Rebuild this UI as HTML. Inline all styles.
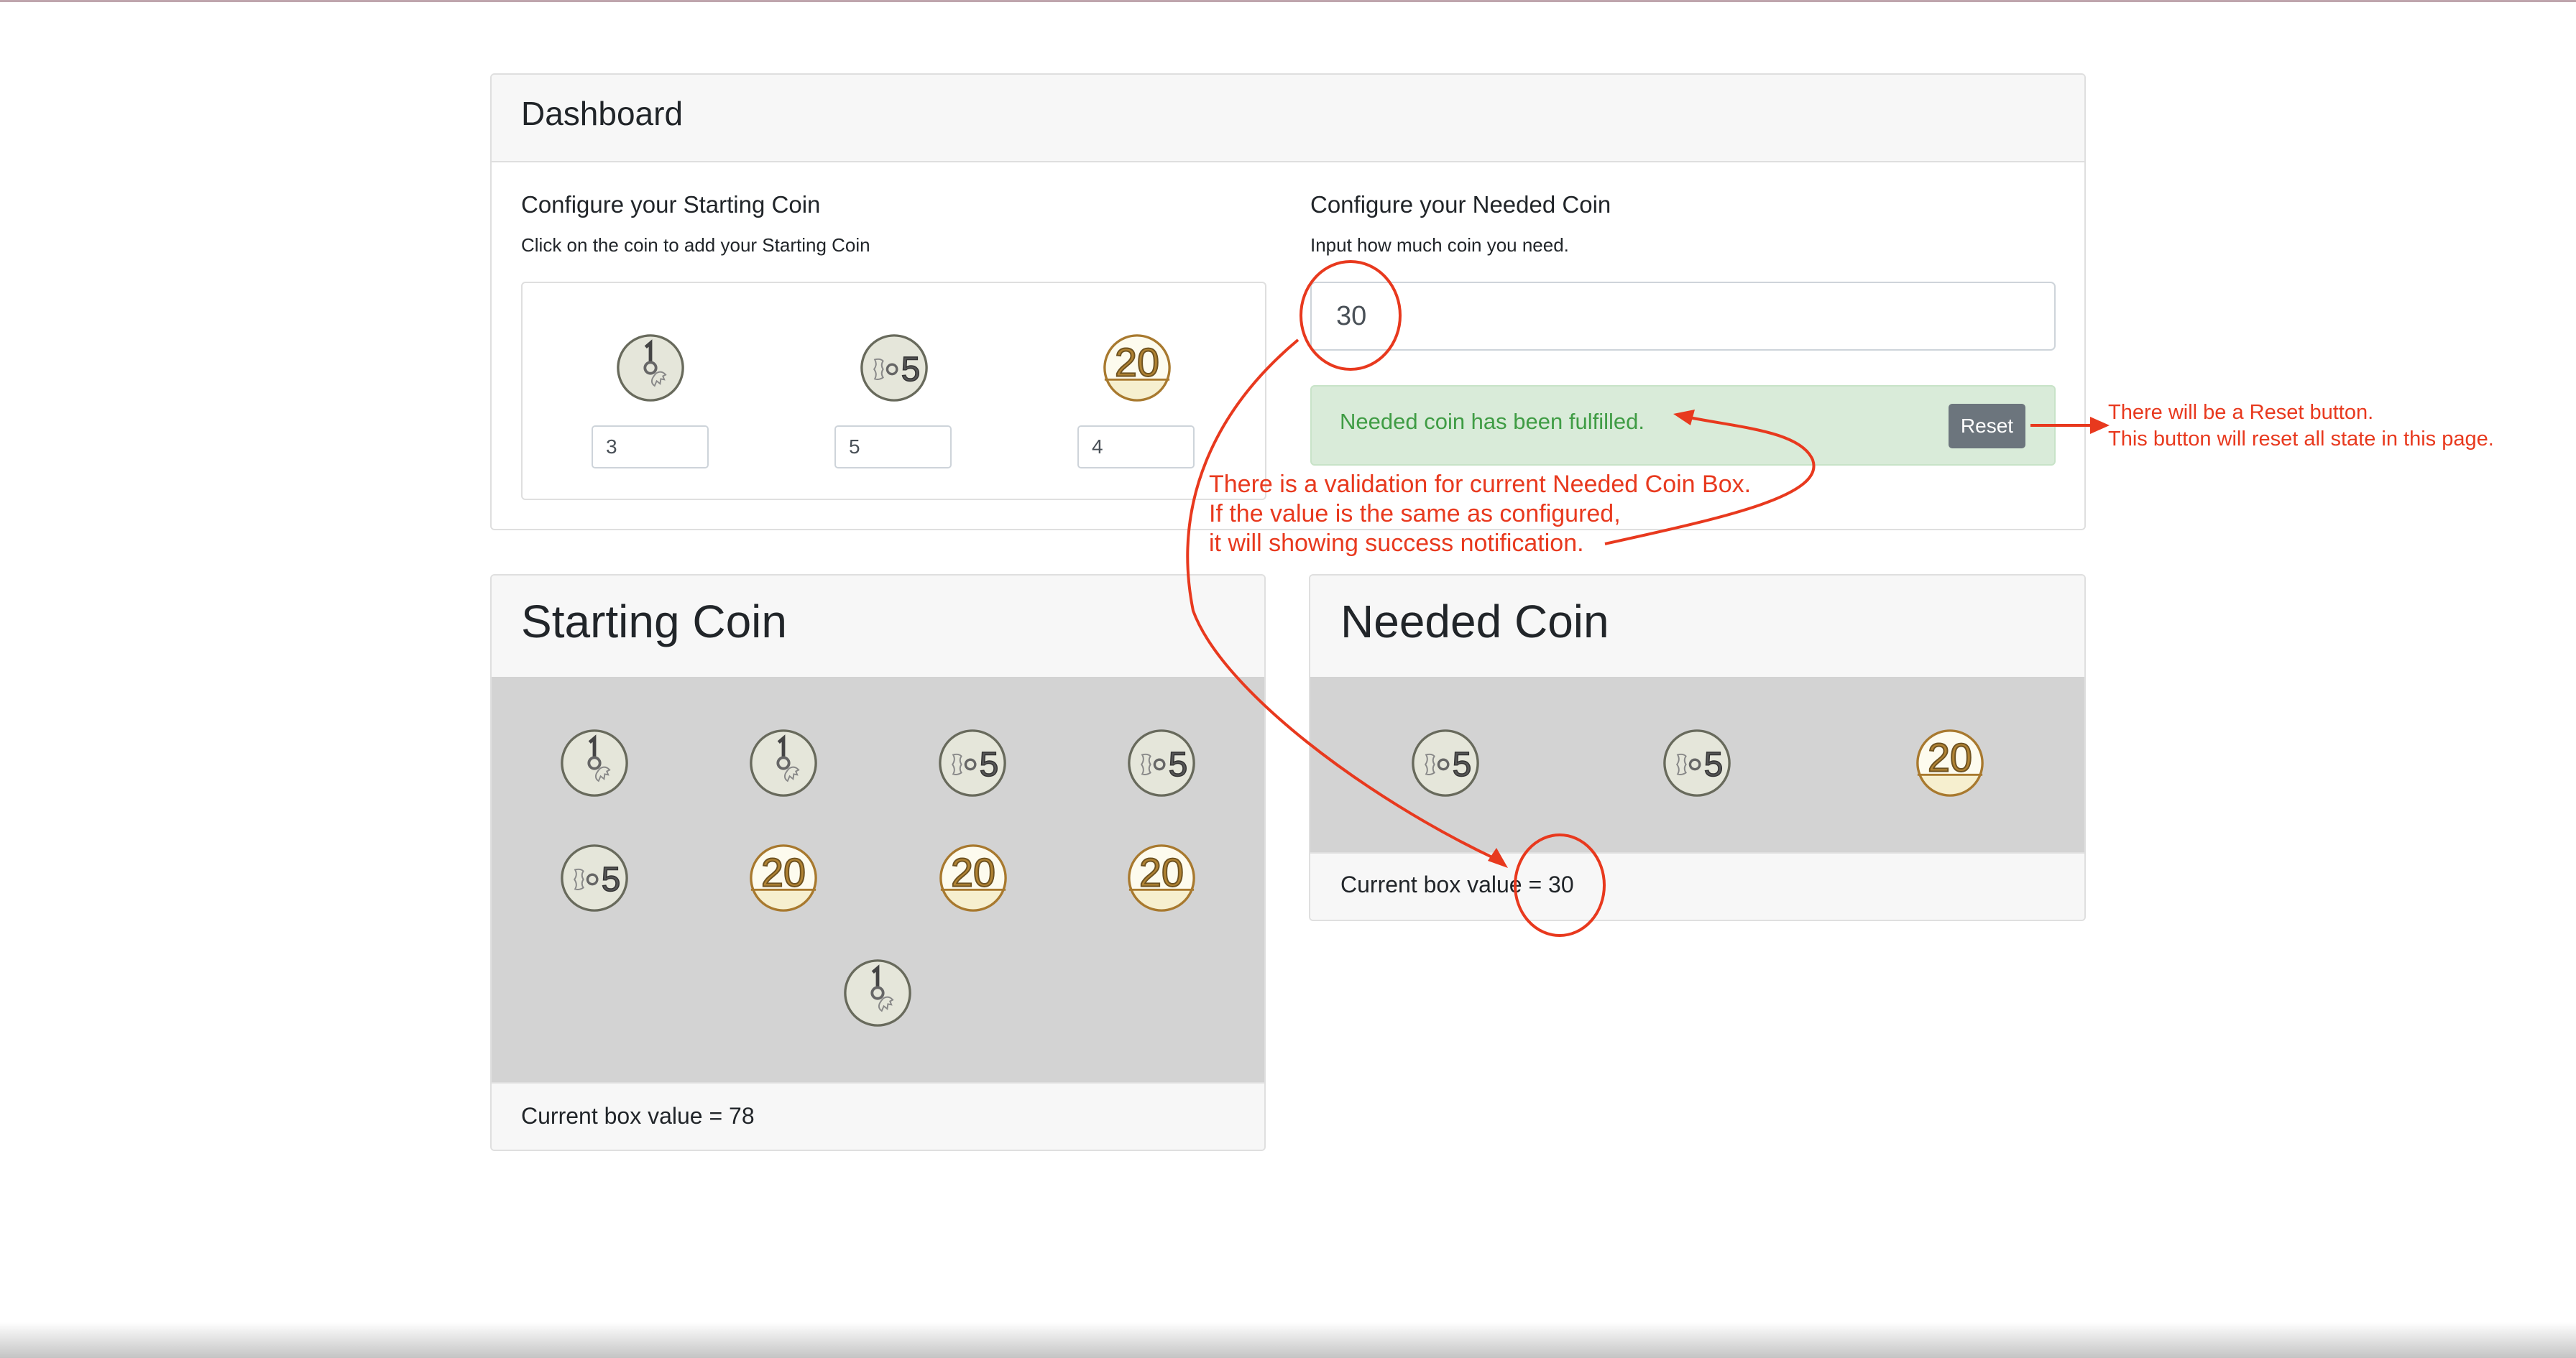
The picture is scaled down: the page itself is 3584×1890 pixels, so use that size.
<!DOCTYPE html>
<html><head><meta charset="utf-8"><style>
*{box-sizing:border-box;margin:0;padding:0}
body{width:3584px;height:1890px;background:#fff;position:relative;overflow:hidden;font-family:"Liberation Sans",Arial,sans-serif;color:#212529}
.abs{position:absolute}
.card{position:absolute;border:2px solid #dfdfdf;border-radius:6px;background:#fff;overflow:hidden}
.hdr{position:absolute;left:0;right:0;top:0;background:#f7f7f7;border-bottom:2px solid #dfdfdf}
.coin{position:absolute;width:96px;height:96px}
.inp{position:absolute;border:2px solid #ced4da;border-radius:5px;background:#fff;font-size:28px;color:#495057;padding-left:18px;display:flex;align-items:center}
.red{color:#e8391e;font-size:34px;line-height:41px;white-space:nowrap}
</style></head><body>
<div class="abs" style="left:0;top:0;width:3584px;height:3px;background:#bfa5ad"></div>

<!-- Dashboard -->
<div class="card" style="left:682px;top:102px;width:2220px;height:636px">
  <div class="hdr" style="height:122px"></div>
  <div class="abs" style="left:41px;top:24px;font-size:46px;line-height:60px">Dashboard</div>
  <div class="abs" style="left:41px;top:162px;font-size:33px">Configure your Starting Coin</div>
  <div class="abs" style="left:41px;top:222px;font-size:26px">Click on the coin to add your Starting Coin</div>
  <div class="abs" style="left:41px;top:288px;width:1037px;height:304px;border:2px solid #dfdfdf;border-radius:6px"></div>
  <div class="abs" style="left:1139px;top:162px;font-size:33px">Configure your Needed Coin</div>
  <div class="abs" style="left:1139px;top:222px;font-size:26px">Input how much coin you need.</div>
  <div class="inp" style="left:1139px;top:288px;width:1037px;height:96px;font-size:38px;padding-left:34px;border-radius:7px">30</div>
  <div class="abs" style="left:1139px;top:432px;width:1037px;height:112px;background:#d9ebd9;border:2px solid #c8e3c8;border-radius:6px"></div>
  <div class="abs" style="left:1180px;top:465px;font-size:31px;color:#3f9c44">Needed coin has been fulfilled.</div>
  <div class="abs" style="left:2027px;top:458px;width:107px;height:62px;background:#6c757d;border-radius:5px;color:#fff;font-size:28px;display:flex;align-items:center;justify-content:center">Reset</div>
</div>
<div class="inp" style="left:823px;top:592px;width:163px;height:60px">3</div>
<div class="inp" style="left:1161px;top:592px;width:163px;height:60px">5</div>
<div class="inp" style="left:1499px;top:592px;width:163px;height:60px">4</div>

<!-- Starting Coin -->
<div class="card" style="left:682px;top:799px;width:1079px;height:803px">
  <div class="hdr" style="height:141px;border-bottom:none"></div>
  <div class="abs" style="left:0;right:0;top:141px;height:564px;background:#d3d3d3"></div>
  <div class="abs" style="left:0;right:0;top:705px;bottom:0;background:#f7f7f7;border-top:2px solid #dfdfdf"></div>
  <div class="abs" style="left:41px;top:24px;font-size:64px;line-height:80px">Starting Coin</div>
  <div class="abs" style="left:41px;top:734px;font-size:32px">Current box value = 78</div>
</div>

<!-- Needed Coin -->
<div class="card" style="left:1821px;top:799px;width:1081px;height:483px">
  <div class="hdr" style="height:141px;border-bottom:none"></div>
  <div class="abs" style="left:0;right:0;top:141px;height:244px;background:#d3d3d3"></div>
  <div class="abs" style="left:0;right:0;top:385px;bottom:0;background:#f7f7f7;border-top:2px solid #dfdfdf"></div>
  <div class="abs" style="left:42px;top:24px;font-size:64px;line-height:80px">Needed Coin</div>
  <div class="abs" style="left:42px;top:412px;font-size:32px">Current box value = 30</div>
</div>

<svg width="0" height="0" style="position:absolute">
<defs>
<symbol id="c1" viewBox="0 0 100 100"><circle cx="50" cy="50" r="47" fill="#e5e6da" stroke="#686a5c" stroke-width="3.5"/><path d="M43 20 L50 14 L50 41" fill="none" stroke="#444" stroke-width="5"/><circle cx="50" cy="50" r="8" fill="none" stroke="#666" stroke-width="4"/><path d="M58 58 Q66 53 72 60 L68 62 L70 67 L65 66 L64 73 L59 69 L56 76 Q50 72 53 65 Q56 60 58 58Z" fill="none" stroke="#888" stroke-width="2"/></symbol>
<symbol id="c5" viewBox="0 0 100 100"><circle cx="50" cy="50" r="47" fill="#e5e6da" stroke="#686a5c" stroke-width="3.5"/><text x="60" y="69" font-family="Liberation Sans,sans-serif" font-size="50" fill="#555" stroke="#333" stroke-width="1.5">5</text><circle cx="47" cy="52" r="7" fill="none" stroke="#666" stroke-width="3.5"/><path d="M22 38 Q30 36 34 40 Q30 46 34 52 Q30 58 34 64 Q28 68 22 66 Q26 59 21 52 Q26 45 22 38Z" fill="none" stroke="#888" stroke-width="2"/></symbol>
<symbol id="c20" viewBox="0 0 100 100"><clipPath id="cc"><circle cx="50" cy="50" r="47"/></clipPath><circle cx="50" cy="50" r="47" fill="#fdfbee"/><rect x="0" y="67" width="100" height="40" fill="#f6efcf" clip-path="url(#cc)"/><line x1="3" y1="67" x2="97" y2="67" stroke="#a8792e" stroke-width="3"/><circle cx="50" cy="50" r="47" fill="none" stroke="#a8792e" stroke-width="3.5"/><text x="50" y="62" text-anchor="middle" font-family="Liberation Sans,sans-serif" font-size="58" fill="#b08232" stroke="#6e5220" stroke-width="2">20</text></symbol>
</defs></svg>

<svg class="coin" style="left:857px;top:464px"><use href="#c1"/></svg>
<svg class="coin" style="left:1196px;top:464px"><use href="#c5"/></svg>
<svg class="coin" style="left:1534px;top:464px"><use href="#c20"/></svg>

<svg class="coin" style="left:779px;top:1014px"><use href="#c1"/></svg>
<svg class="coin" style="left:1042px;top:1014px"><use href="#c1"/></svg>
<svg class="coin" style="left:1305px;top:1014px"><use href="#c5"/></svg>
<svg class="coin" style="left:1568px;top:1014px"><use href="#c5"/></svg>
<svg class="coin" style="left:779px;top:1174px"><use href="#c5"/></svg>
<svg class="coin" style="left:1042px;top:1174px"><use href="#c20"/></svg>
<svg class="coin" style="left:1306px;top:1174px"><use href="#c20"/></svg>
<svg class="coin" style="left:1568px;top:1174px"><use href="#c20"/></svg>
<svg class="coin" style="left:1173px;top:1334px"><use href="#c1"/></svg>

<svg class="coin" style="left:1963px;top:1014px"><use href="#c5"/></svg>
<svg class="coin" style="left:2313px;top:1014px"><use href="#c5"/></svg>
<svg class="coin" style="left:2665px;top:1014px"><use href="#c20"/></svg>

<!-- annotations -->
<div class="abs red" style="left:1682px;top:654px">There is a validation for current Needed Coin Box.<br>If the value is the same as configured,<br>it will showing success notification.</div>
<div class="abs red" style="left:2933px;top:556px;font-size:29px;line-height:37px">There will be a Reset button.<br>This button will reset all state in this page.</div>
<svg class="abs" style="left:0;top:0" width="3584" height="1890">
<g fill="none" stroke="#e8391e" stroke-width="4">
<ellipse cx="1879" cy="439" rx="69" ry="75"/>
<ellipse cx="2170" cy="1232" rx="62" ry="70"/>
<path d="M1806 473 C1690 570 1630 700 1660 850 C1700 960 1900 1110 2080 1195"/>
<path d="M2233 757 C2400 720 2540 690 2522 640 C2505 600 2420 595 2345 580"/>
<path d="M2825 592 L2910 592"/>
</g>
<g fill="#e8391e">
<path d="M2098 1208 L2070 1198 L2082 1180Z"/>
<path d="M2328 576 L2358 570 L2352 592Z"/>
<path d="M2935 592 L2908 580 L2908 604Z"/>
</g>
</svg>
<div class="abs" style="left:0;top:1840px;width:3584px;height:50px;background:linear-gradient(#fff,#c4c4c4)"></div>
</body></html>
